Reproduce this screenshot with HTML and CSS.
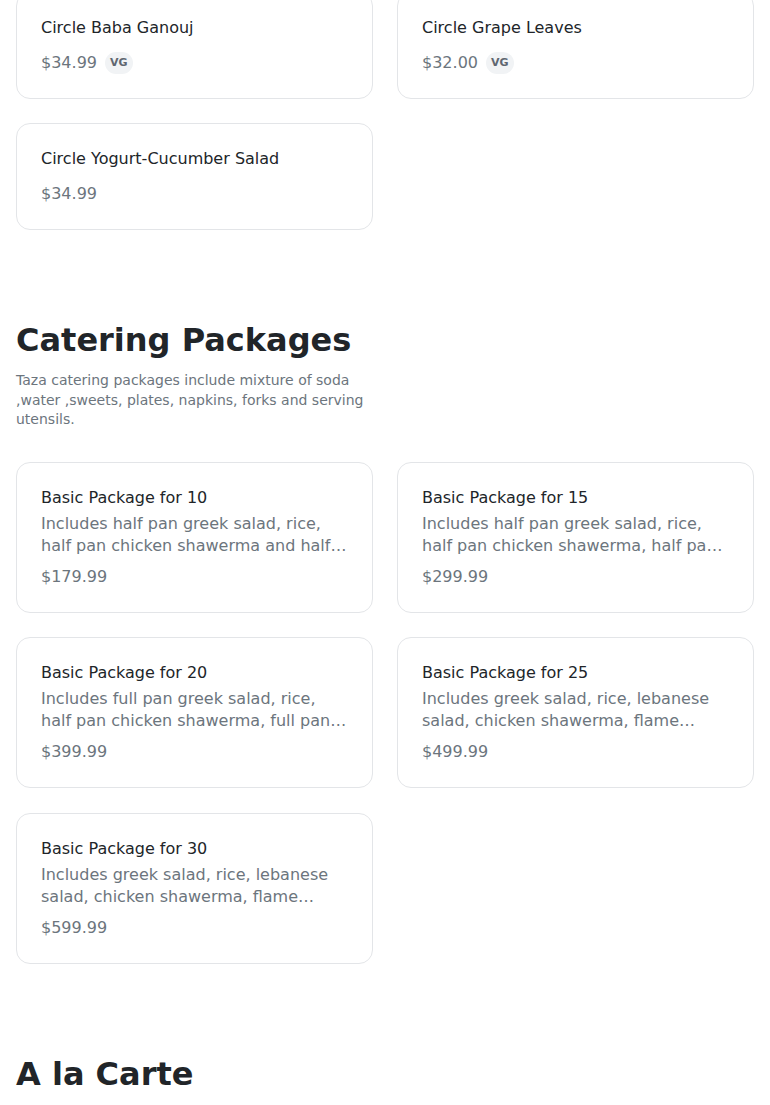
FILE: index.html
```html
<!DOCTYPE html>
<html>
<head>
<meta charset="utf-8">
<link rel="stylesheet" href="styles.css">
</head>
<body>
<div class="page">
  <div class="grid first">
    <div class="card">
      <div class="title">Circle Baba Ganouj</div>
      <div class="price-row"><span class="price">$34.99</span><span class="badge">VG</span></div>
    </div>
    <div class="card">
      <div class="title">Circle Grape Leaves</div>
      <div class="price-row"><span class="price">$32.00</span><span class="badge">VG</span></div>
    </div>
    <div class="card">
      <div class="title">Circle Yogurt-Cucumber Salad</div>
      <div class="price-row"><span class="price">$34.99</span></div>
    </div>
  </div>

  <section class="section">
    <h2 class="heading">Catering Packages</h2>
    <p class="section-desc">Taza catering packages include mixture of soda ,water ,sweets, plates, napkins, forks and serving utensils.</p>
    <div class="grid packages">
      <div class="card">
        <div class="title">Basic Package for 10</div>
        <div class="desc">Includes half pan greek salad, rice, half pan chicken shawerma and half pan beef shawerma, hummus and pita bread.</div>
        <div class="price-row"><span class="price">$179.99</span></div>
      </div>
      <div class="card">
        <div class="title">Basic Package for 15</div>
        <div class="desc">Includes half pan greek salad, rice, half pan chicken shawerma, half pan beef shawerma, hummus and pita bread.</div>
        <div class="price-row"><span class="price">$299.99</span></div>
      </div>
      <div class="card">
        <div class="title">Basic Package for 20</div>
        <div class="desc">Includes full pan greek salad, rice, half pan chicken shawerma, full pan beef shawerma, hummus and pita bread.</div>
        <div class="price-row"><span class="price">$399.99</span></div>
      </div>
      <div class="card">
        <div class="title">Basic Package for 25</div>
        <div class="desc">Includes greek salad, rice, lebanese salad, chicken shawerma, flame grilled kabobs, hummus and pita bread.</div>
        <div class="price-row"><span class="price">$499.99</span></div>
      </div>
      <div class="card">
        <div class="title">Basic Package for 30</div>
        <div class="desc">Includes greek salad, rice, lebanese salad, chicken shawerma, flame grilled kabobs, hummus and pita bread.</div>
        <div class="price-row"><span class="price">$599.99</span></div>
      </div>
    </div>
  </section>

  <section class="section">
    <h2 class="heading">A la Carte</h2>
  </section>
</div>
</body>
</html>
```

FILE: styles.css
```css
html, body {
  margin: 0;
  padding: 0;
  background: #ffffff;
}
body {
  font-family: "DejaVu Sans", "Liberation Sans", sans-serif;
  color: #212529;
  overflow: hidden;
}
.page {
  padding: 0 16px;
}
.grid {
  display: grid;
  grid-template-columns: 1fr 1fr;
  column-gap: 24px;
  row-gap: 24px;
}
.grid.first {
  margin-top: -8px;
}
.grid.packages {
  row-gap: 24.5px;
}
.card {
  border: 1px solid #e3e5e8;
  border-radius: 14px;
  padding: 25px 24px;
  background: #fff;
  display: flex;
  flex-direction: column;
}
.title {
  font-size: 16px;
  line-height: 20px;
  color: #212529;
  margin-bottom: 5px;
}
.desc {
  font-size: 16px;
  line-height: 22px;
  height: 44px;
  color: #6c757d;
  display: -webkit-box;
  -webkit-line-clamp: 2;
  -webkit-box-orient: vertical;
  overflow: hidden;
}
.price-row {
  margin-top: 10px;
  display: flex;
  align-items: center;
  height: 20px;
}
.price {
  font-size: 16px;
  line-height: 20px;
  color: #6c757d;
}
.badge {
  margin-left: 8px;
  background: #f1f3f5;
  color: #5f6670;
  font-size: 11px;
  font-weight: bold;
  line-height: 22px;
  height: 22px;
  padding: 0 5px;
  border-radius: 11px;
}
.section {
  margin-top: 91px;
}
.heading {
  margin: 0;
  font-size: 32px;
  line-height: 38px;
  font-weight: bold;
  color: #212529;
}
.section-desc {
  margin: 12px 0 32px;
  font-size: 14px;
  line-height: 19.5px;
  color: #6c757d;
  max-width: 357px;
}
```
